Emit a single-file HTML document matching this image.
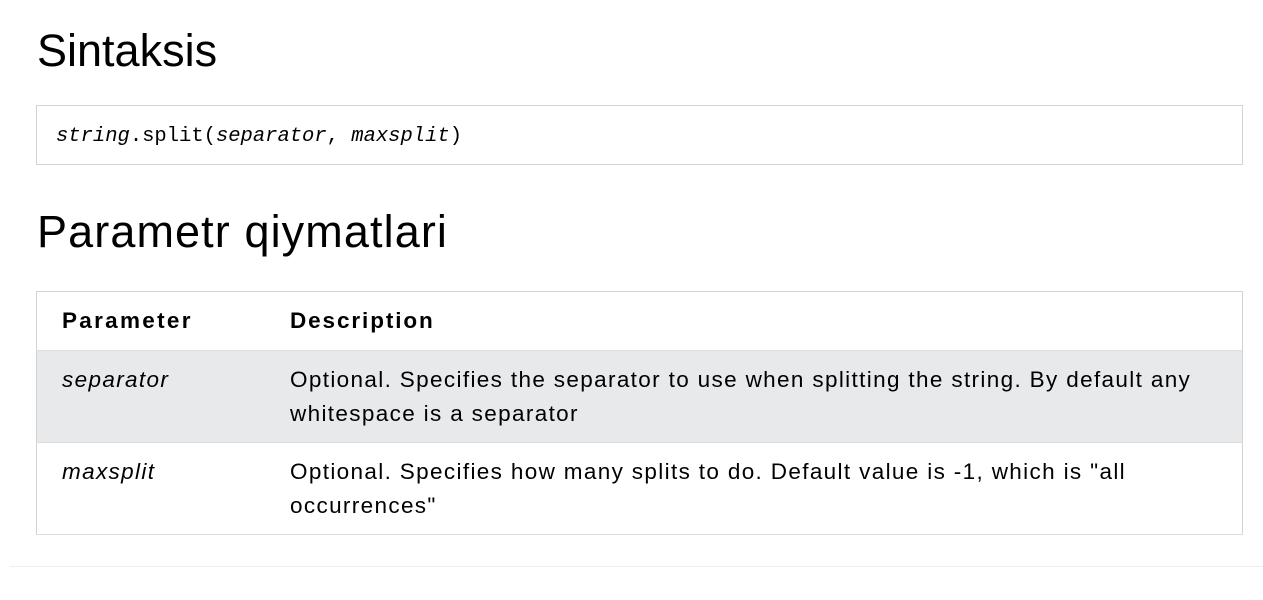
<!DOCTYPE html>
<html><head><meta charset="utf-8"><style>
body{margin:0;background:#fff;color:#000;font-family:"Liberation Sans",sans-serif;font-size:22.5px;width:1263px;height:600px;overflow:hidden;position:relative}
h2{font-weight:normal;font-size:45px;margin:0;position:absolute;left:37px;line-height:1}
.code{position:absolute;left:36px;top:105px;width:1205px;height:58px;border:1px solid #d3d3d3;font-family:"Liberation Mono",monospace;font-size:20.5px;box-sizing:content-box}
.code span{position:absolute;left:19px;top:19px}
table{position:absolute;left:36px;top:291px;width:1207px;border-collapse:collapse;border:1px solid #d3d3d3}
td,th{text-align:left;vertical-align:top;padding:12px 12px;line-height:33.5px;white-space:nowrap;letter-spacing:1.35px}
th{letter-spacing:1.9px}
th:first-child{letter-spacing:2.3px}
td:first-child,th:first-child{padding-left:25px;width:204px}
th{font-weight:bold;height:34px}
tr{border-bottom:1px solid #ddd}
tr.g{background:#e7e9eb}
hr{position:absolute;left:10px;right:0;top:566px;margin:0;border:0;border-top:1px solid #eee}
</style></head><body>
<h2 style="top:28px">Sintaksis</h2>
<div class="code"><span><i>string</i>.split(<i>separator</i>, <i>maxsplit</i>)</span></div>
<h2 style="top:209px;letter-spacing:1.1px">Parametr qiymatlari</h2>
<table>
<tr><th>Parameter</th><th>Description</th></tr>
<tr class="g"><td><i>separator</i></td><td>Optional. Specifies the separator to use when splitting the string. By default any<br>whitespace is a separator</td></tr>
<tr><td><i>maxsplit</i></td><td>Optional. Specifies how many splits to do. Default value is -1, which is "all<br>occurrences"</td></tr>
</table>
<hr>
</body></html>
